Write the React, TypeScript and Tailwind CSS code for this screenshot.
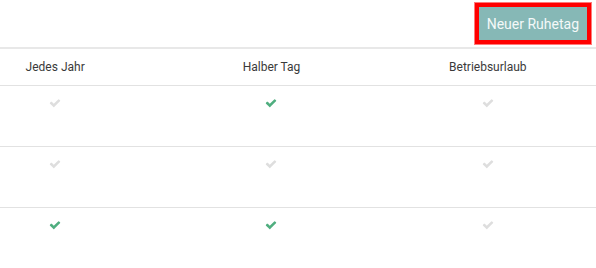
import React from "react";

const rows = [
  [false, true, false],
  [false, false, false],
  [true, true, false],
];

// FontAwesome 4 style check
const Check = ({ on }: { on: boolean }) => (
  <svg
    viewBox="0 0 1792 1792"
    width="12"
    height="12"
    className={on ? "text-[#4fae7f]" : "text-[#dedede]"}
  >
    <path
      fill="currentColor"
      d="M1671 566q0 40-28 68l-724 724-136 136q-28 28-68 28t-68-28l-136-136-362-362q-28-28-28-68t28-68l136-136q28-28 68-28t68 28l294 295 656-657q28-28 68-28t68 28l136 136q28 28 28 68z"
    />
  </svg>
);

export default function App() {
  return (
    <div className="w-[596px] h-[268px] overflow-hidden bg-white font-['Roboto','Liberation_Sans',sans-serif]">
      <div className="h-[47px] flex justify-end items-start pt-[2px] pr-[4px]">
        <div className="border border-[#ff7a7a]">
          <div className="border-4 border-[#ff0000]">
            <button className="h-[33px] px-[8px] bg-[#86b8b6] text-[#f4f9f9] text-[14px] leading-none">
              Neuer Ruhetag
            </button>
          </div>
        </div>
      </div>
      <div className="border-t-2 border-[#e8e8e8]" />
      <div className="ml-[-53px] w-[649px]">
        <div className="grid grid-cols-3 h-[37px] items-center border-b border-[#e2e2e2] text-[12px] text-[#3a3a3a] text-center">
          <div>Jedes Jahr</div>
          <div>Halber Tag</div>
          <div>Betriebsurlaub</div>
        </div>
        {rows.map((r, i) => (
          <div
            key={i}
            className={`grid grid-cols-3 h-[61px] pt-[11px] ${i < rows.length - 1 ? "border-b border-[#e2e2e2]" : ""}`}
          >
            {r.map((on, j) => (
              <div key={j} className="flex justify-center">
                <Check on={on} />
              </div>
            ))}
          </div>
        ))}
      </div>
    </div>
  );
}
